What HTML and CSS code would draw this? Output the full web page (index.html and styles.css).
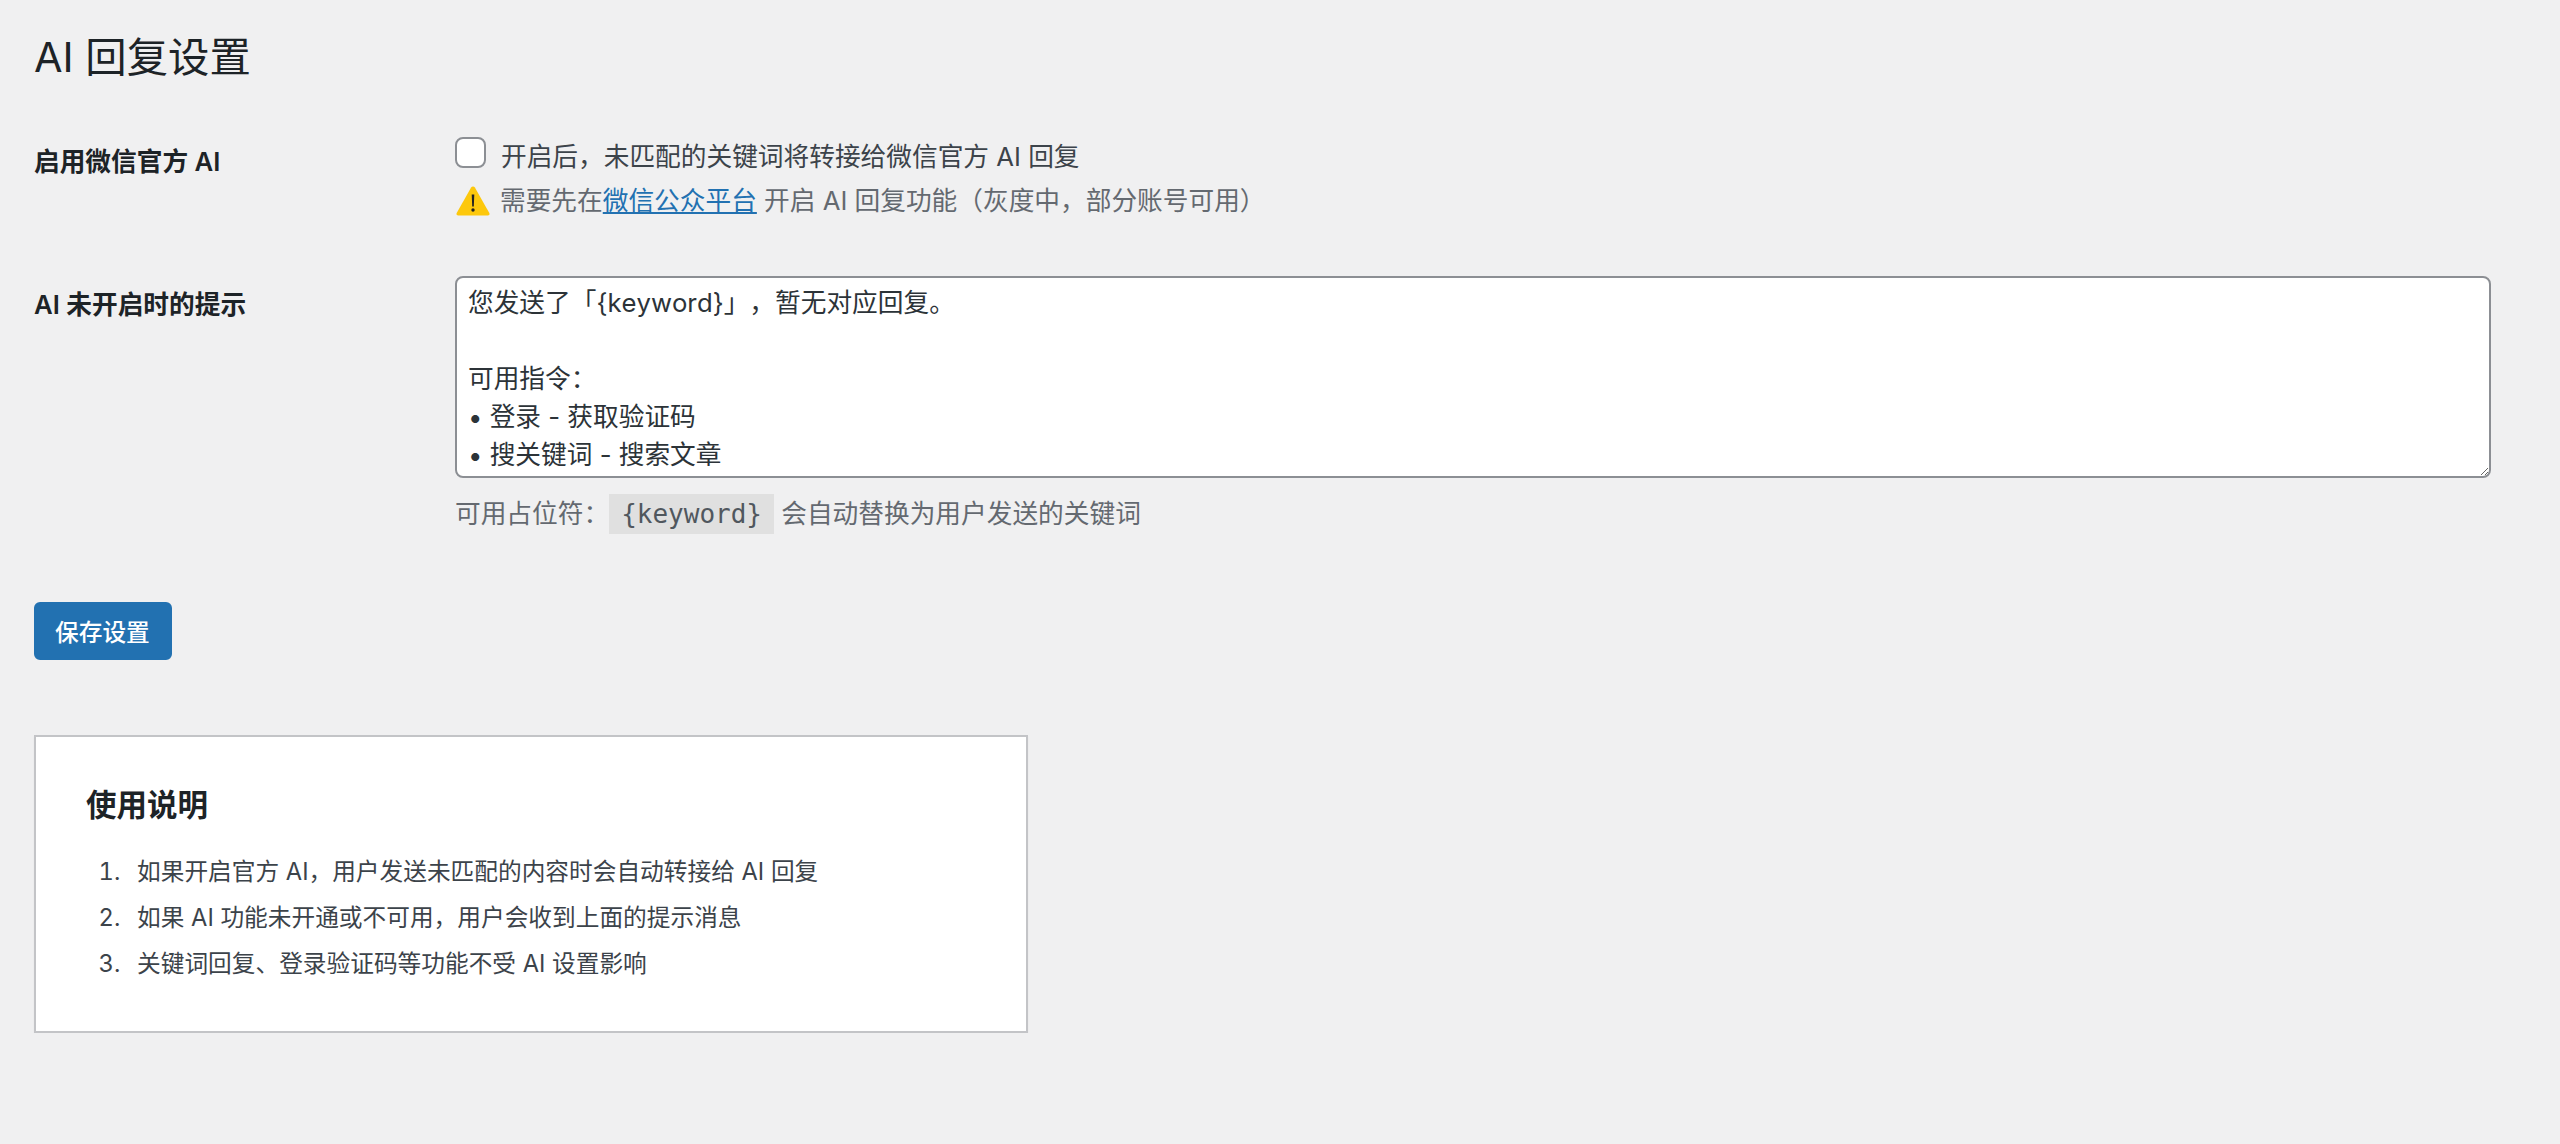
FILE: index.html
```html
<!DOCTYPE html>
<html lang="zh-CN">
<head>
    <meta charset="UTF-8">
    <meta name="viewport" content="width=device-width, initial-scale=1.0">
    <title>AI 回复设置</title>
    <link rel="stylesheet" href="styles.css">
</head>
<body>
    <div class="wrap">
        <h1>AI 回复设置</h1>

        <form class="settings-form">
            <div class="form-row row-enable">
                <label class="row-label" for="enableAi">启用微信官方 AI</label>
                <div class="row-field">
                    <label class="check-line">
                        <input type="checkbox" id="enableAi">
                        <span>开启后，未匹配的关键词将转接给微信官方 AI 回复</span>
                    </label>
                    <p class="description warn-line">
                        <svg class="warn-icon" viewBox="0 0 34 30" aria-hidden="true">
                            <path d="M17 .5c.8 0 1.500.4 1.900 1.100l14.400 25.400c.7 1.300-.1 2.500-1.600 2.500H2.300c-1.500 0-2.300-1.200-1.600-2.500L15.100 1.600C15.500.9 16.200.5 17 .5z" fill="#fdc80c"/>
                            <path d="M15.700 8.500h2.600l-.5 12h-1.600z" fill="#222"/>
                            <circle cx="17" cy="24" r="1.700" fill="#222"/>
                        </svg>
                        <span>需要先在<a href="#">微信公众平台</a> 开启 AI 回复功能（灰度中，部分账号可用）</span>
                    </p>
                </div>
            </div>

            <div class="form-row row-fallback">
                <label class="row-label" for="fallbackText">AI 未开启时的提示</label>
                <div class="row-field">
                    <textarea id="fallbackText" rows="5">您发送了「{keyword}」，暂无对应回复。

可用指令：
• 登录 - 获取验证码
• 搜关键词 - 搜索文章</textarea>
                    <p class="description hint-line">可用占位符：<code>{keyword}</code> 会自动替换为用户发送的关键词</p>
                </div>
            </div>

            <button type="submit" class="button-primary">保存设置</button>
        </form>

        <div class="card">
            <h3>使用说明</h3>
            <ol>
                <li>如果开启官方 AI，用户发送未匹配的内容时会自动转接给 AI 回复</li>
                <li>如果 AI 功能未开通或不可用，用户会收到上面的提示消息</li>
                <li>关键词回复、登录验证码等功能不受 AI 设置影响</li>
            </ol>
        </div>
    </div>
</body>
</html>
```

FILE: styles.css
```css
body {
    background-color: #f0f0f1;
    color: #3c434a;
    font-family: Inter, "Noto Sans CJK SC", sans-serif;
    font-size: 25.7px;
    line-height: 1.4;
    margin: 0;
    padding: 0;
    text-spacing-trim: space-all;
}
.wrap {
    padding: 30px 69px 0 34px;
}
h1 {
    color: #1d2327;
    font-size: 41.4px;
    font-weight: 400;
    line-height: 54px;
    margin: 0 0 53px;
}
.form-row {
    display: grid;
    grid-template-columns: 421px 1fr;
}
.row-enable {
    margin-bottom: 57px;
}
.row-fallback {
    margin-bottom: 68px;
}
.row-label {
    color: #1d2327;
    font-weight: 600;
    line-height: 36px;
    padding-top: 7px;
}
.row-fallback .row-label {
    padding-top: 11px;
}
.check-line {
    align-items: flex-start;
    display: flex;
    gap: 15px;
}
.check-line span {
    line-height: 36px;
    padding-top: 2px;
}
input[type="checkbox"] {
    appearance: none;
    background: #fff;
    border: 2px solid #8c8f94;
    border-radius: 8px;
    flex: none;
    height: 31px;
    margin: 0;
    width: 31px;
}
.description {
    color: #646970;
    margin: 0;
}
.warn-line {
    align-items: center;
    display: flex;
    gap: 10px;
    line-height: 36px;
    margin-top: 8px;
}
.warn-icon {
    flex: none;
    height: 30px;
    margin-left: 1px;
    width: 34px;
}
a {
    color: #2271b1;
    text-decoration: underline;
}
textarea {
    background: #fff;
    border: 2px solid #8c8f94;
    border-radius: 8px;
    box-sizing: border-box;
    color: #2c3338;
    display: block;
    font-family: inherit;
    font-feature-settings: "chws" 0;
    font-kerning: none;
    font-size: 25.7px;
    line-height: 38px;
    margin: 0;
    padding: 6px 11px 2px;
    text-spacing-trim: space-all;
    width: 100%;
}
.hint-line {
    line-height: 40px;
    margin-top: 16px;
}
code {
    background: #e0e0e0;
    color: #50575e;
    display: inline-block;
    font-family: "DejaVu Sans Mono", monospace;
    font-size: 26px;
    line-height: 40px;
    padding: 0 12px;
}
.button-primary {
    background: #2271b1;
    border: 2px solid #2271b1;
    border-radius: 6px;
    color: #fff;
    display: block;
    font-family: inherit;
    font-size: 23.7px;
    font-weight: 500;
    height: 58px;
    padding: 0 20px 0 19px;
}
.card {
    background: #fff;
    border: 2px solid #c3c4c7;
    box-shadow: 0 2px 2px rgba(0, 0, 0, 0.04);
    box-sizing: border-box;
    height: 298px;
    margin-top: 75px;
    padding: 46px 50px;
    width: 994px;
}
h3 {
    color: #1d2327;
    font-size: 30.5px;
    font-weight: 600;
    line-height: 44px;
    margin: 0 0 27px;
}
ol {
    font-size: 23.7px;
    margin: 0;
    padding-left: 51px;
}
li {
    line-height: 36px;
    margin-bottom: 10px;
}
li::marker {
    content: counter(list-item) ".\00a0\00a0\2006";
}
```
